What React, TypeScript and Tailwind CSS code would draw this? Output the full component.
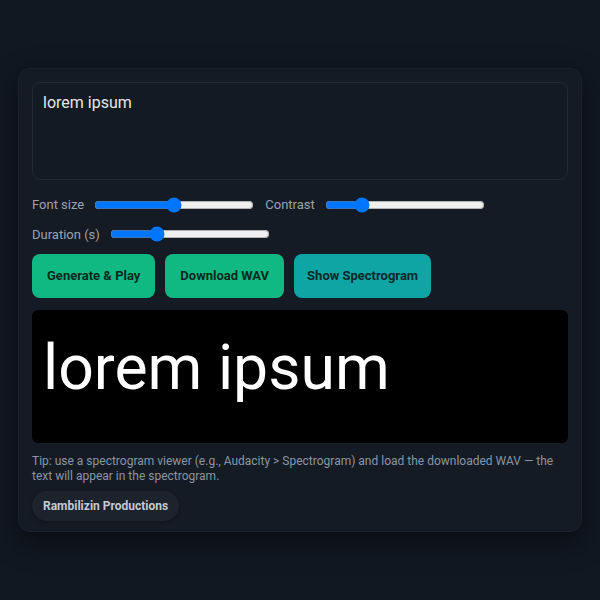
import React, { useState } from "react";

const Slider: React.FC<{ label: string; value: number; onChange: (v: number) => void }> = ({ label, value, onChange }) => (
  <label className="flex items-center gap-[10px] text-[13px] text-[#9aa3b0]">
    <span>{label}</span>
    <input
      type="range"
      min={0}
      max={100}
      value={value}
      onChange={(e) => onChange(Number(e.target.value))}
      className="w-[160px] accent-[#0075ff]"
    />
  </label>
);

export default function App() {
  const [text, setText] = useState("lorem ipsum");
  const [fontSize, setFontSize] = useState(50);
  const [contrast, setContrast] = useState(20);
  const [duration, setDuration] = useState(27);

  return (
    <div className="min-h-[600px] w-full bg-[#111822] pt-[68px] px-[18px] font-['Roboto',sans-serif]">
      <div className="rounded-xl border border-[#1a212b] bg-[#151b24] p-[13px] pb-[10px] shadow-[0_10px_30px_rgba(0,0,0,0.45)]">
        <textarea
          value={text}
          onChange={(e) => setText(e.target.value)}
          className="block h-[98px] w-full resize-none rounded-lg border border-[#222a35] bg-[#131a23] px-[10px] pt-[8px] text-[16px] text-[#e5e7eb] outline-none"
        />

        <div className="mt-[15px] flex flex-wrap gap-x-[11px] gap-y-[10px]">
          <Slider label="Font size" value={fontSize} onChange={setFontSize} />
          <Slider label="Contrast" value={contrast} onChange={setContrast} />
          <Slider label="Duration (s)" value={duration} onChange={setDuration} />
        </div>

        <div className="mt-[10px] flex gap-[10px]">
          <button className="h-[44px] rounded-lg bg-[#10b981] px-[15px] text-[13px] font-bold text-[#06291f]">
            Generate &amp; Play
          </button>
          <button className="h-[44px] rounded-lg bg-[#10b981] px-[15px] text-[13px] font-bold text-[#06291f]">
            Download WAV
          </button>
          <button className="h-[44px] rounded-lg bg-[#0ea5a4] px-[13px] text-[13px] font-bold text-[#06292a]">
            Show Spectrogram
          </button>
        </div>

        <div className="mt-3 flex h-[133px] items-start rounded-md bg-black px-[11px] pt-[27px]">
          <span className="text-[62.5px] leading-none text-white">{text}</span>
        </div>

        <p className="mt-[11px] text-[12px] leading-[15px] text-[#8b95a4]">
          Tip: use a spectrogram viewer (e.g., Audacity &gt; Spectrogram) and load the downloaded WAV — the text will appear in the spectrogram.
        </p>

        <div className="mt-[7px] inline-block rounded-full bg-[#1c232d] px-[11px] py-[6px] text-[12px] font-bold text-[#c3cad4] shadow-[0_1px_4px_rgba(0,0,0,0.3)]">
          Rambilizin Productions
        </div>
      </div>
    </div>
  );
}
